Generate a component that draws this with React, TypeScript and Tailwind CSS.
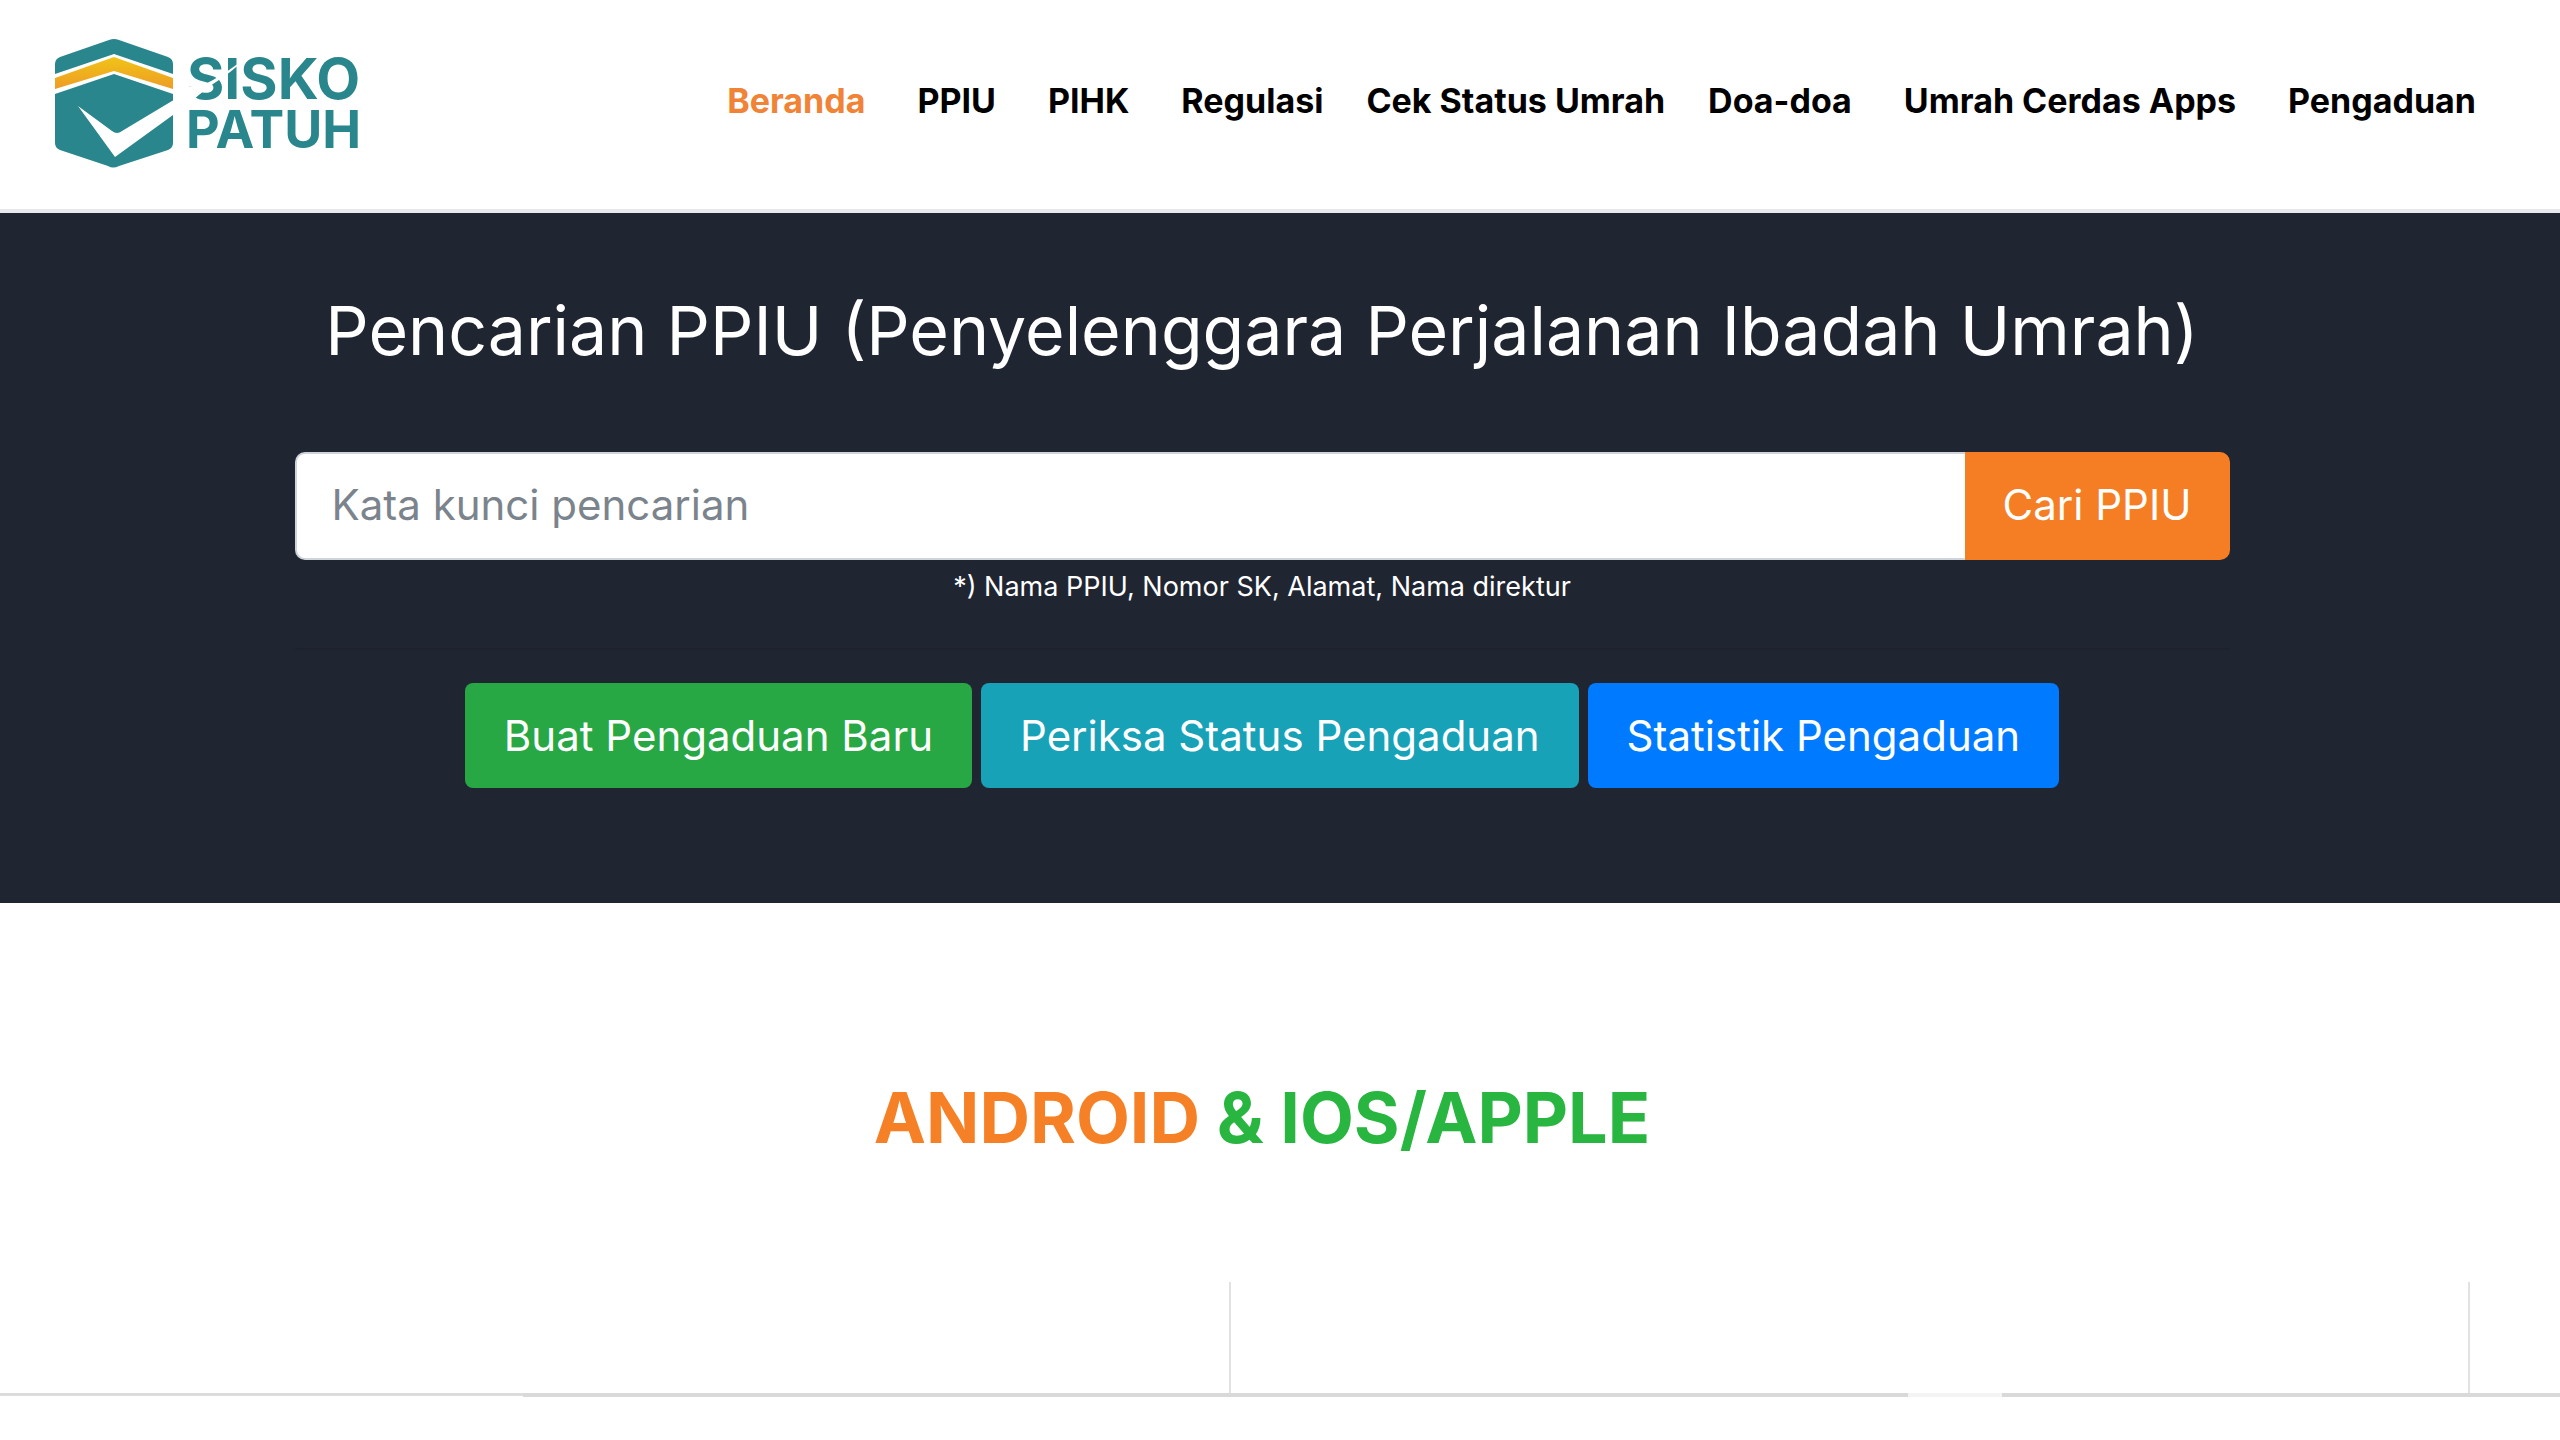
import React from "react";

function NavLink({ label, active = false }: { label: string; active?: boolean }) {
  return (
    <li>
      <a
        href="#"
        aria-current={active ? "page" : undefined}
        className={
          active
            ? "whitespace-nowrap text-[#f08336]"
            : "whitespace-nowrap hover:text-[#f08336]"
        }
      >
        {label}
      </a>
    </li>
  );
}

function Logo() {
  return (
    <svg
      viewBox="55 33 310 136"
      className="h-[136px] w-[310px] shrink-0"
      role="img"
      aria-label="SISKO PATUH"
    >
      <defs>
        <linearGradient id="band" x1="0" y1="1" x2="0" y2="0">
          <stop offset="0" stopColor="#ee9c25" />
          <stop offset="1" stopColor="#f0c417" />
        </linearGradient>
      </defs>
      <g fill="#2a868d">
        <path d="M55 74V64Q55 59 60 57L109 40Q114 38 119 40L168 57Q173 59 173 64V74L114 54Z" />
        <path d="M55 94L114 74L173 94V143Q173 148 168 150L119 166Q113 169 108 166L60 150Q55 148 55 143Z" />
      </g>
      <path d="M55 78L114 57L173 78V89L114 71L55 89Z" fill="url(#band)" />
      <g fill="#2a868d" fontFamily="Inter, sans-serif" fontWeight="700">
        <text x="187" y="99" fontSize="57">SISKO</text>
        <text x="186" y="148" fontSize="52">PATUH</text>
      </g>
      <path
        d="M78 106L112 131Q117 135 122 131L172 101L213 80Q230 70 246 58Q232 72 213 84Q196 97 173 115L115 157Z"
        fill="#fff"
      />
      <path d="M184 88L200 84L206 88L190 103L184 103Z" fill="#fff" />
    </svg>
  );
}

const actionClass =
  "flex h-[105px] items-center rounded-lg px-[39px] text-[42px] whitespace-nowrap text-white";

export default function App() {
  return (
    <div className="min-h-screen bg-white font-['Inter',sans-serif] text-black">
      <header className="flex items-center justify-between border-b-4 border-[#e9e9eb] pt-[33px] pr-[84px] pb-10 pl-[55px]">
        <a href="#">
          <Logo />
        </a>
        <nav aria-label="Menu utama">
          <ul className="flex items-center gap-[52px] text-[34px] leading-[44px] font-bold">
            <NavLink label="Beranda" active />
            <NavLink label="PPIU" />
            <NavLink label="PIHK" />
            <li>
              <ul className="flex gap-[43px]">
                <NavLink label="Regulasi" />
                <NavLink label="Cek Status Umrah" />
                <NavLink label="Doa-doa" />
              </ul>
            </li>
            <NavLink label="Umrah Cerdas Apps" />
            <NavLink label="Pengaduan" />
          </ul>
        </nav>
      </header>

      <main>
        <section className="bg-[#202532] pt-[75px] pr-9 pb-[115px] text-white">
          <div className="mx-auto w-full max-w-[1935px]">
            <h1 className="text-center text-[68px] leading-[84px] font-normal">
              Pencarian PPIU (Penyelenggara Perjalanan Ibadah Umrah)
            </h1>
            <form className="mt-20 flex h-[108px]" onSubmit={(e) => e.preventDefault()}>
              <input
                type="text"
                aria-label="Kata kunci pencarian"
                aria-describedby="petunjuk"
                placeholder="Kata kunci pencarian"
                className="min-w-0 flex-1 rounded-l-[10px] border-2 border-r-0 border-[#ced4da] bg-white px-[35px] pb-1 text-[42px] text-[#495057] placeholder:text-[#7b848c] placeholder:opacity-100"
              />
              <button
                type="submit"
                className="w-[265px] rounded-r-[10px] bg-[#f57e25] pb-1 text-[42px]"
              >
                Cari PPIU
              </button>
            </form>
            <p id="petunjuk" className="mt-1.5 text-center text-[27px] leading-[42px]">
              *) Nama PPIU, Nomor SK, Alamat, Nama direktur
            </p>
            <hr className="mt-10 border-t-2 border-[#1d222e]" />
            <div className="mt-[33px] flex justify-center gap-[9px]">
              <button type="button" className={`${actionClass} bg-[#28a745]`}>
                Buat Pengaduan Baru
              </button>
              <button type="button" className={`${actionClass} bg-[#17a2b8]`}>
                Periksa Status Pengaduan
              </button>
              <button type="button" className={`${actionClass} bg-[#007bff]`}>
                Statistik Pengaduan
              </button>
            </div>
          </div>
        </section>

        <section>
          <h2 className="pt-[173px] pr-9 text-center text-[70px] leading-[84px] font-bold text-[#28b540]">
            <span className="text-[#f58026]">ANDROID</span> &amp; IOS/APPLE
          </h2>
          <div className="mt-[122px] flex h-[111px]">
            <div className="w-[48.1%] border-r-2 border-[#e2e2e2]" />
            <div className="w-[48.4%] border-r-2 border-[#e2e2e2]" />
          </div>
          <div className="flex h-1 items-end">
            <div className="h-[3px] flex-[523] self-start bg-[#dcdcdc]" />
            <div className="h-1 flex-[1385] bg-[#d9d9d9]" />
            <div className="h-1 flex-[94] bg-[#f4f4f4]" />
            <div className="h-1 flex-[558] bg-[#d9d9d9]" />
          </div>
        </section>
      </main>
    </div>
  );
}
